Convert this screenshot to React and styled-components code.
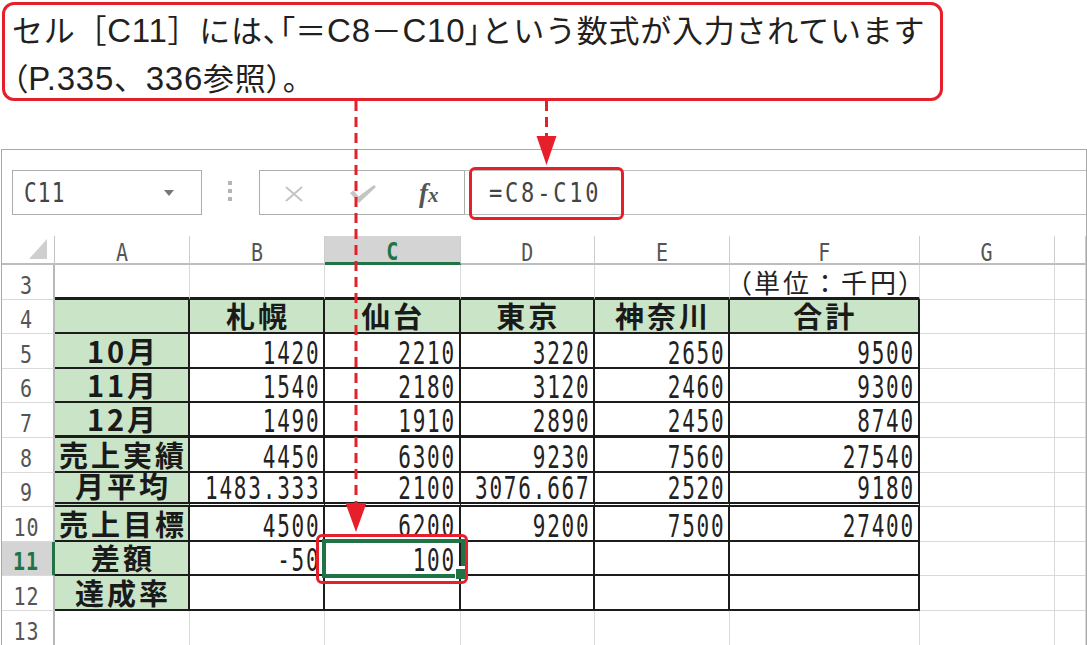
import React from 'react';
import styled, { createGlobalStyle } from 'styled-components';

const RED = '#e61f2b';
const GREEN = '#217346';
const INK = '#1c1c1c';
const GRID = '#d9d9d9';
const FILL = '#c9e4c6';

const GlobalStyle = createGlobalStyle`
  html, body {
    margin: 0;
    padding: 0;
    background: #fff;
  }
  body {
    width: 1087px;
    height: 645px;
    overflow: hidden;
    font-family: "Noto Sans CJK JP", "Noto Sans", sans-serif;
  }
`;

const rows = [
  { n: 3, cells: ['', '', '', '', '', 'unit'] },
  { n: 4, cells: ['', '札幌', '仙台', '東京', '神奈川', '合計'] },
  { n: 5, cells: ['10月', '1420', '2210', '3220', '2650', '9500'] },
  { n: 6, cells: ['11月', '1540', '2180', '3120', '2460', '9300'] },
  { n: 7, cells: ['12月', '1490', '1910', '2890', '2450', '8740'] },
  { n: 8, cells: ['売上実績', '4450', '6300', '9230', '7560', '27540'] },
  { n: 9, cells: ['月平均', '1483.333', '2100', '3076.667', '2520', '9180'] },
  { n: 10, cells: ['売上目標', '4500', '6200', '9200', '7500', '27400'] },
  { n: 11, cells: ['差額', '-50', '100', '', '', ''] },
  { n: 12, cells: ['達成率', '', '', '', '', ''] },
  { n: 13, cells: ['', '', '', '', '', ''] },
];

const COLS = ['A', 'B', 'C', 'D', 'E', 'F', 'G', ''];

const App = () => {
  return (
    <Page>
      <GlobalStyle />
      <Callout>
        <Line>
          セル［<Latin>C11</Latin>］には<Punct>、「</Punct>＝<Latin>C8</Latin>－<Latin>C10</Latin>
          <Punct>」</Punct>という数式が入力されています
        </Line>
        <Line>
          <Punct>（</Punct>
          <Latin>P.335</Latin>、<Latin>336</Latin>参照<Punct>）</Punct>。
        </Line>
      </Callout>

      <Sheet>
        <FormulaBar>
          <NameBox>
            <NameText>C11</NameText>
            <Caret />
          </NameBox>
          <Dots>
            <Dot />
            <Dot />
            <Dot />
          </Dots>
          <FxBox>
            <svg width="18" height="16" viewBox="0 0 18 16">
              <path d="M1 1 L17 15 M17 1 L1 15" stroke="#c4c4c4" strokeWidth="2" fill="none" />
            </svg>
            <svg width="28" height="20" viewBox="0 0 28 20">
              <path d="M1 9 L4.5 6.5 L9.5 12.5 L25 1 L27 3 L10 19 Z" fill="#c4c4c4" />
            </svg>
            <Fx>
              f<small>x</small>
            </Fx>
          </FxBox>
          <FormulaInput>
            <FormulaText>=C8-C10</FormulaText>
          </FormulaInput>
        </FormulaBar>

        <Grid>
          <Corner>
            <svg width="18" height="20" viewBox="0 0 18 20">
              <polygon points="18,0 18,20 0,20" fill="#cfcfcf" />
            </svg>
          </Corner>
          {COLS.map((c, i) => (
            <ColHead key={c + i} $active={c === 'C'}>
              <HeadText $active={c === 'C'}>{c}</HeadText>
            </ColHead>
          ))}

          {rows.map(row => (
            <React.Fragment key={row.n}>
              <RowHead $active={row.n === 11}>
                <RowNum $active={row.n === 11}>{row.n}</RowNum>
              </RowHead>
              {COLS.map((c, i) => {
                const inTable = row.n >= 4 && row.n <= 12 && i <= 5;
                let b;
                let r;
                if (inTable) {
                  r = `2px solid ${INK}`;
                  b = `2px solid ${INK}`;
                  if (row.n === 7) b = `3px solid ${INK}`;
                  if (row.n === 9) b = `5px double ${INK}`;
                }
                if (row.n === 3 && i <= 5) b = `3px solid ${INK}`;
                const value = i <= 5 ? row.cells[i] : '';
                const isLabel = inTable && (i === 0 || row.n === 4);
                return (
                  <Cell
                    key={c + i}
                    $b={b}
                    $r={r}
                    $fill={isLabel}
                    $center={isLabel}
                  >
                    {value === 'unit' && (
                      <Unit>
                        <Punct>（</Punct>単位：千円<Punct>）</Punct>
                      </Unit>
                    )}
                    {value !== 'unit' && isLabel && value && <Label>{value}</Label>}
                    {value !== 'unit' && !isLabel && value && <Num>{value}</Num>}
                    {row.n === 11 && c === 'C' && (
                      <Selection>
                        <Handle />
                      </Selection>
                    )}
                  </Cell>
                );
              })}
            </React.Fragment>
          ))}
        </Grid>
      </Sheet>

      <Highlight $x={469} $y={167} $w={155} $h={53} />
      <Highlight $x={316} $y={534} $w={152} $h={50} />

      <Arrows width="1087" height="645" viewBox="0 0 1087 645">
        <line x1="356" y1="101" x2="356" y2="505" stroke={RED} strokeWidth="3" strokeDasharray="10 6" />
        <polygon points="345.5,503 366.5,503 356,532" fill={RED} />
        <line x1="546.5" y1="101" x2="546.5" y2="138" stroke={RED} strokeWidth="3" strokeDasharray="10 6" />
        <polygon points="536.5,136 556.5,136 546.5,165" fill={RED} />
      </Arrows>
    </Page>
  );
};

export default App;

const Page = styled.div`
  position: relative;
  width: 1087px;
  height: 645px;
  overflow: hidden;
  background: #fff;
`;

const Callout = styled.div`
  box-sizing: border-box;
  margin: 2px 0 0 2px;
  width: 941px;
  height: 99px;
  padding: 1px 0 0 7px;
  border: 3px solid ${RED};
  border-radius: 12px;
  font-family: "Noto Sans CJK JP", sans-serif;
  font-size: 31px;
  letter-spacing: 0.75px;
  color: #231f20;
  white-space: nowrap;
`;

const Line = styled.div`
  line-height: 46px;
`;

const Latin = styled.span`
  font-family: "Liberation Sans", "Noto Sans CJK JP", sans-serif;
  font-size: 33px;
`;

const Punct = styled.span`
  font-feature-settings: "palt";
`;

const Sheet = styled.div`
  box-sizing: border-box;
  margin: 48px 0 0 1px;
  width: 1086px;
  border: 1px solid #a9a9a9;
  border-bottom: none;
`;

const FormulaBar = styled.div`
  display: flex;
  align-items: flex-start;
  height: 86px;
  padding-top: 20px;
  box-sizing: border-box;
`;

const NameBox = styled.div`
  box-sizing: border-box;
  display: flex;
  align-items: center;
  justify-content: space-between;
  margin-left: 10px;
  width: 190px;
  height: 45px;
  padding: 0 27px 0 11px;
  border: 1px solid #adadad;
`;

const NameText = styled.span`
  display: inline-block;
  font-family: "DejaVu Sans Mono", monospace;
  font-size: 21px;
  letter-spacing: 1.2px;
  line-height: 24px;
  color: #444;
  transform: scaleY(1.3);
`;

const Caret = styled.span`
  width: 0;
  height: 0;
  border-left: 5px solid transparent;
  border-right: 5px solid transparent;
  border-top: 6px solid #777;
`;

const Dots = styled.div`
  display: flex;
  flex-direction: column;
  gap: 4px;
  margin: 11px 0 0 26px;
`;

const Dot = styled.span`
  width: 4px;
  height: 4px;
  background: #b5b5b5;
`;

const FxBox = styled.div`
  box-sizing: border-box;
  display: flex;
  align-items: center;
  gap: 46px;
  margin-left: 27px;
  width: 206px;
  height: 45px;
  padding: 2px 0 0 25px;
  border: 1px solid #adadad;
`;

const Fx = styled.span`
  font-family: "Liberation Serif", serif;
  font-style: italic;
  font-weight: 700;
  font-size: 27px;
  line-height: 24px;
  color: #555;
  margin-left: -4px;

  small {
    font-size: 21px;
  }
`;

const FormulaInput = styled.div`
  box-sizing: border-box;
  flex: 1;
  display: flex;
  align-items: center;
  height: 45px;
  padding-left: 24px;
  border-top: 1px solid #bdbdbd;
  border-bottom: 1px solid #bdbdbd;
`;

const FormulaText = styled.span`
  display: inline-block;
  font-family: "DejaVu Sans Mono", monospace;
  font-size: 22px;
  letter-spacing: 2.8px;
  line-height: 24px;
  color: #444;
  transform: scaleY(1.22);
`;

const Grid = styled.div`
  display: grid;
  grid-template-columns: 53px 135px 135px 135.5px 134.5px 135px 189.5px 135px 1fr;
  grid-template-rows: 29px repeat(11, 34.6px);
`;

const Corner = styled.div`
  box-sizing: border-box;
  display: flex;
  align-items: flex-end;
  justify-content: flex-end;
  padding: 0 7px 4px 0;
  border-right: 1px solid #c4c4c4;
  border-bottom: 2px solid #bdbdbd;
`;

const ColHead = styled.div`
  box-sizing: border-box;
  display: flex;
  align-items: flex-end;
  justify-content: center;
  background: ${p => (p.$active ? '#d4d4d4' : '#fff')};
  border-right: 1px solid #cdcdcd;
  border-bottom: ${p => (p.$active ? `3px solid ${GREEN}` : '2px solid #bdbdbd')};
`;

const HeadText = styled.span`
  display: inline-block;
  font-family: "DejaVu Sans Mono", monospace;
  font-size: 20px;
  line-height: 18px;
  font-weight: ${p => (p.$active ? 700 : 400)};
  color: ${p => (p.$active ? GREEN : '#555')};
  transform: scaleY(1.22);
  transform-origin: 50% 100%;
`;

const RowHead = styled.div`
  box-sizing: border-box;
  display: flex;
  align-items: flex-end;
  justify-content: center;
  padding: 0 2px 2px 0;
  background: ${p => (p.$active ? '#d4d4d4' : '#fff')};
  border-right: ${p => (p.$active ? `3px solid ${GREEN}` : '2px solid #b8b8b8')};
  border-bottom: 1px solid #dadada;
`;

const RowNum = styled.span`
  display: inline-block;
  font-family: "DejaVu Sans Mono", monospace;
  font-size: 20px;
  letter-spacing: 1px;
  line-height: 18px;
  font-weight: ${p => (p.$active ? 700 : 400)};
  color: ${p => (p.$active ? GREEN : '#555')};
  transform: scaleY(1.26);
  transform-origin: 50% 100%;
`;

const Cell = styled.div`
  position: relative;
  box-sizing: border-box;
  display: flex;
  align-items: flex-end;
  justify-content: ${p => (p.$center ? 'center' : 'flex-end')};
  padding-right: ${p => (p.$center ? '0' : '2.5px')};
  min-width: 0;
  white-space: nowrap;
  background: ${p => (p.$fill ? FILL : '#fff')};
  border-right: ${p => p.$r || `1px solid ${GRID}`};
  border-bottom: ${p => p.$b || `1px solid ${GRID}`};
`;

const Num = styled.span`
  display: inline-block;
  font-family: "DejaVu Sans Mono", monospace;
  font-size: 21px;
  letter-spacing: 1.8px;
  line-height: 18px;
  color: #222;
  transform: scaleY(1.48);
  transform-origin: 50% 100%;
`;

const Label = styled.span`
  font-family: "Noto Sans CJK JP", sans-serif;
  font-weight: 700;
  font-size: 29px;
  line-height: 30px;
  letter-spacing: 3px;
  padding: 0 0 2px 3px;
  color: #1a1a1a;
`;

const Unit = styled.span`
  font-family: "Noto Sans CJK JP", sans-serif;
  font-size: 26px;
  line-height: 30px;
  letter-spacing: 3px;
  color: #222;
  margin-right: 1px;
`;

const Selection = styled.div`
  position: absolute;
  z-index: 3;
  left: -3px;
  top: -3px;
  right: -6px;
  bottom: -4px;
  border: 4px solid ${GREEN};
  pointer-events: none;
`;

const Handle = styled.span`
  position: absolute;
  right: -5px;
  bottom: -5px;
  width: 10px;
  height: 10px;
  background: ${GREEN};
  border-top: 3px solid #fff;
  border-left: 1px solid #fff;
`;

const Highlight = styled.div`
  position: absolute;
  z-index: 4;
  left: ${p => p.$x}px;
  top: ${p => p.$y}px;
  width: ${p => p.$w}px;
  height: ${p => p.$h}px;
  box-sizing: border-box;
  border: 3px solid ${RED};
  border-radius: 6px;
  pointer-events: none;
`;

const Arrows = styled.svg`
  position: absolute;
  z-index: 5;
  left: 0;
  top: 0;
  pointer-events: none;
`;
